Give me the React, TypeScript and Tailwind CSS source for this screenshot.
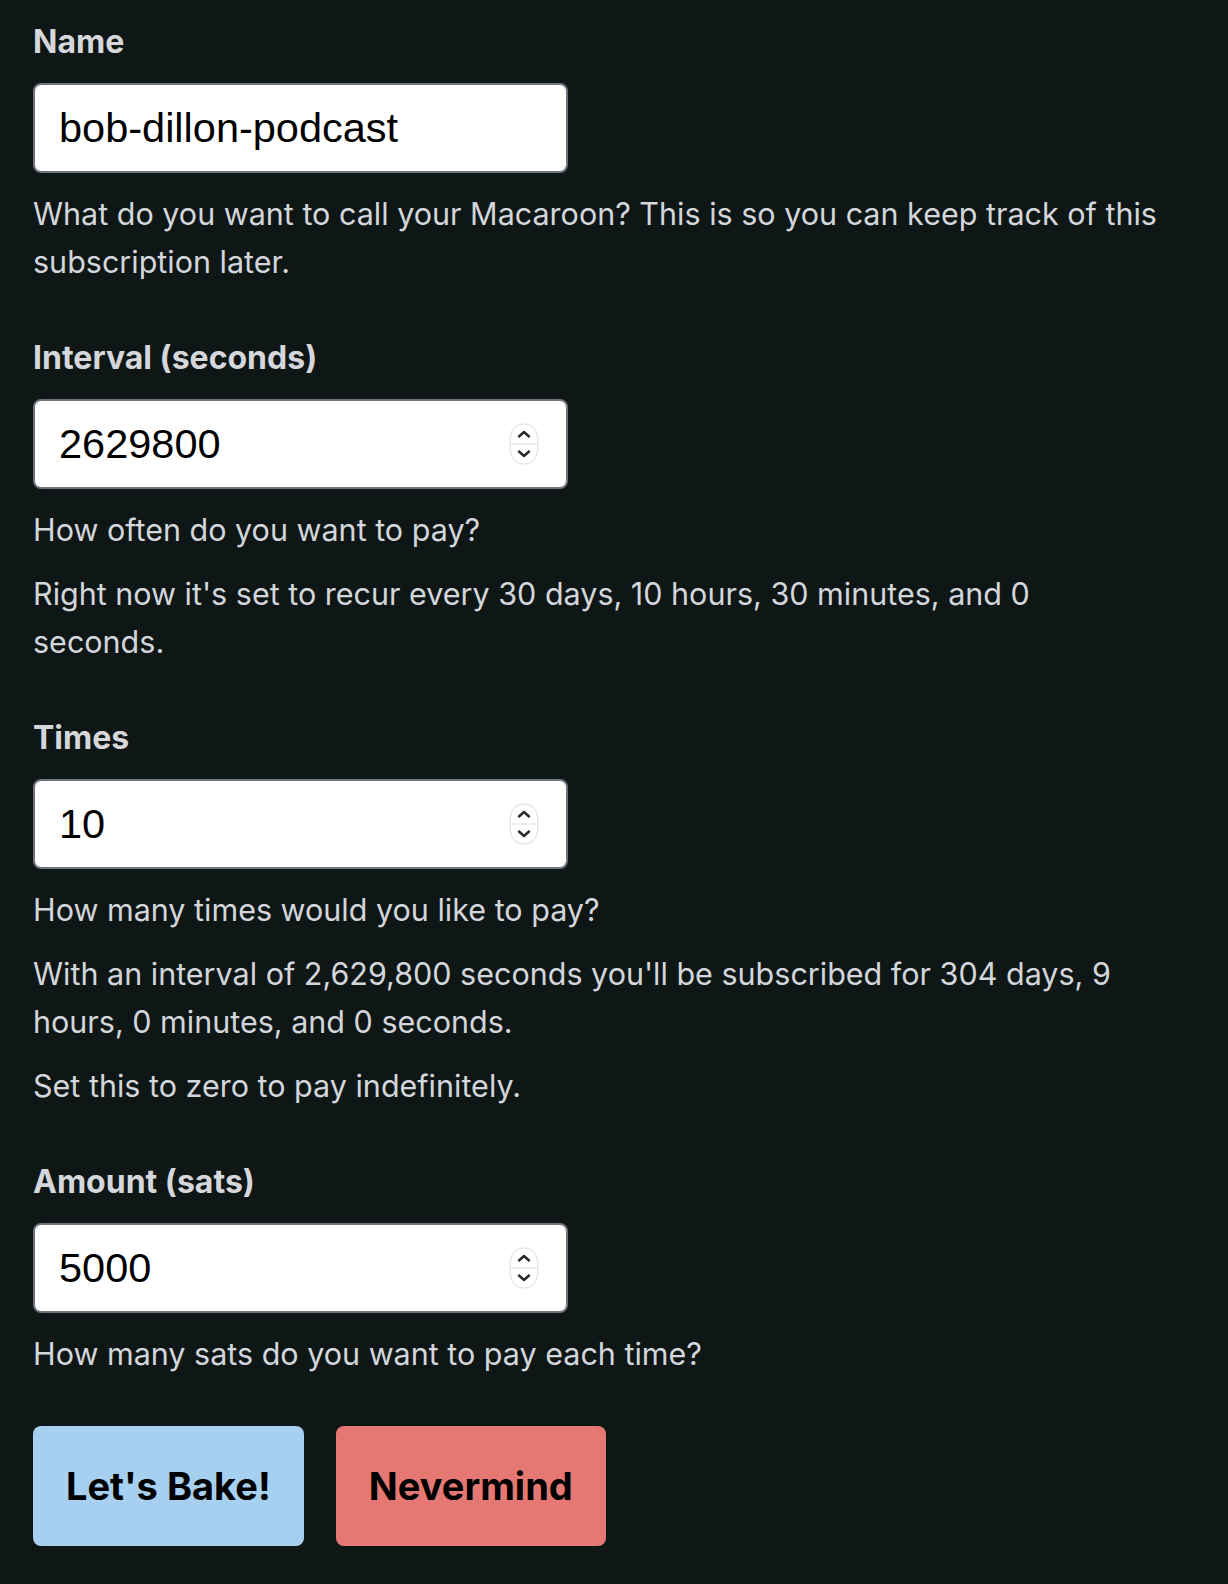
import React from "react";

function Spinner() {
  return (
    <div className="absolute right-[30px] top-1/2 -translate-y-1/2 flex h-[41px] w-[28px] flex-col items-center justify-between rounded-[14px] border border-[#e3e3e3] bg-white shadow-[0_0_2px_rgba(0,0,0,0.08)]">
      <div className="flex h-1/2 w-full items-center justify-center border-b border-[#dcdcdc]">
        <svg width="14" height="9" viewBox="0 0 14 9" fill="none">
          <path d="M2 7 L7 2.5 L12 7" stroke="#2b2b2b" strokeWidth="2.5" strokeLinecap="round" strokeLinejoin="round" />
        </svg>
      </div>
      <div className="flex h-1/2 w-full items-center justify-center">
        <svg width="14" height="9" viewBox="0 0 14 9" fill="none">
          <path d="M2 2 L7 6.5 L12 2" stroke="#2b2b2b" strokeWidth="2.5" strokeLinecap="round" strokeLinejoin="round" />
        </svg>
      </div>
    </div>
  );
}

function Field({
  label,
  value,
  number,
  help,
}: {
  label: string;
  value: string;
  number?: boolean;
  help: string[];
}) {
  return (
    <div className="flex flex-col">
      <label className="block h-[40px] text-[32px] font-bold leading-[40px] text-[#d5d7db]">{label}</label>
      <div className="relative mt-[21px] h-[90px] w-[535px]">
        <input
          type="text"
          defaultValue={value}
          className="h-full w-full rounded-[8px] border-2 border-[#70737b] bg-white pl-[24px] pr-[70px] text-[41.5px] text-black outline-none"
          style={{ fontFamily: '"Liberation Sans", Arial, sans-serif' }}
        />
        {number && <Spinner />}
      </div>
      <div className="mt-[17px] flex flex-col gap-[16px]">
        {help.map((h, i) => (
          <p key={i} className="text-[30.5px] leading-[48px] text-[#d3d6da]">
            {h}
          </p>
        ))}
      </div>
    </div>
  );
}

export default function App() {
  return (
    <div
      className="min-h-[1584px] w-full bg-[#0f1716] pl-[33px] pt-[22px]"
      style={{ fontFamily: 'Inter, "Noto Sans", sans-serif' }}
    >
      <div className="flex w-[1130px] flex-col gap-[52px]">
        <Field
          label="Name"
          value="bob-dillon-podcast"
          help={["What do you want to call your Macaroon? This is so you can keep track of this subscription later."]}
        />
        <Field
          label="Interval (seconds)"
          value="2629800"
          number
          help={[
            "How often do you want to pay?",
            "Right now it's set to recur every 30 days, 10 hours, 30 minutes, and 0 seconds.",
          ]}
        />
        <Field
          label="Times"
          value="10"
          number
          help={[
            "How many times would you like to pay?",
            "With an interval of 2,629,800 seconds you'll be subscribed for 304 days, 9 hours, 0 minutes, and 0 seconds.",
            "Set this to zero to pay indefinitely.",
          ]}
        />
        <Field label="Amount (sats)" value="5000" number help={["How many sats do you want to pay each time?"]} />
      </div>
      <div className="mt-[48px] flex gap-[32px]">
        <button className="h-[120px] rounded-[8px] bg-[#a7cfef] px-[33px] text-[38px] font-bold text-black">
          Let's Bake!
        </button>
        <button className="h-[120px] rounded-[8px] bg-[#e57872] px-[33px] text-[38px] font-bold text-black">
          Nevermind
        </button>
      </div>
    </div>
  );
}
